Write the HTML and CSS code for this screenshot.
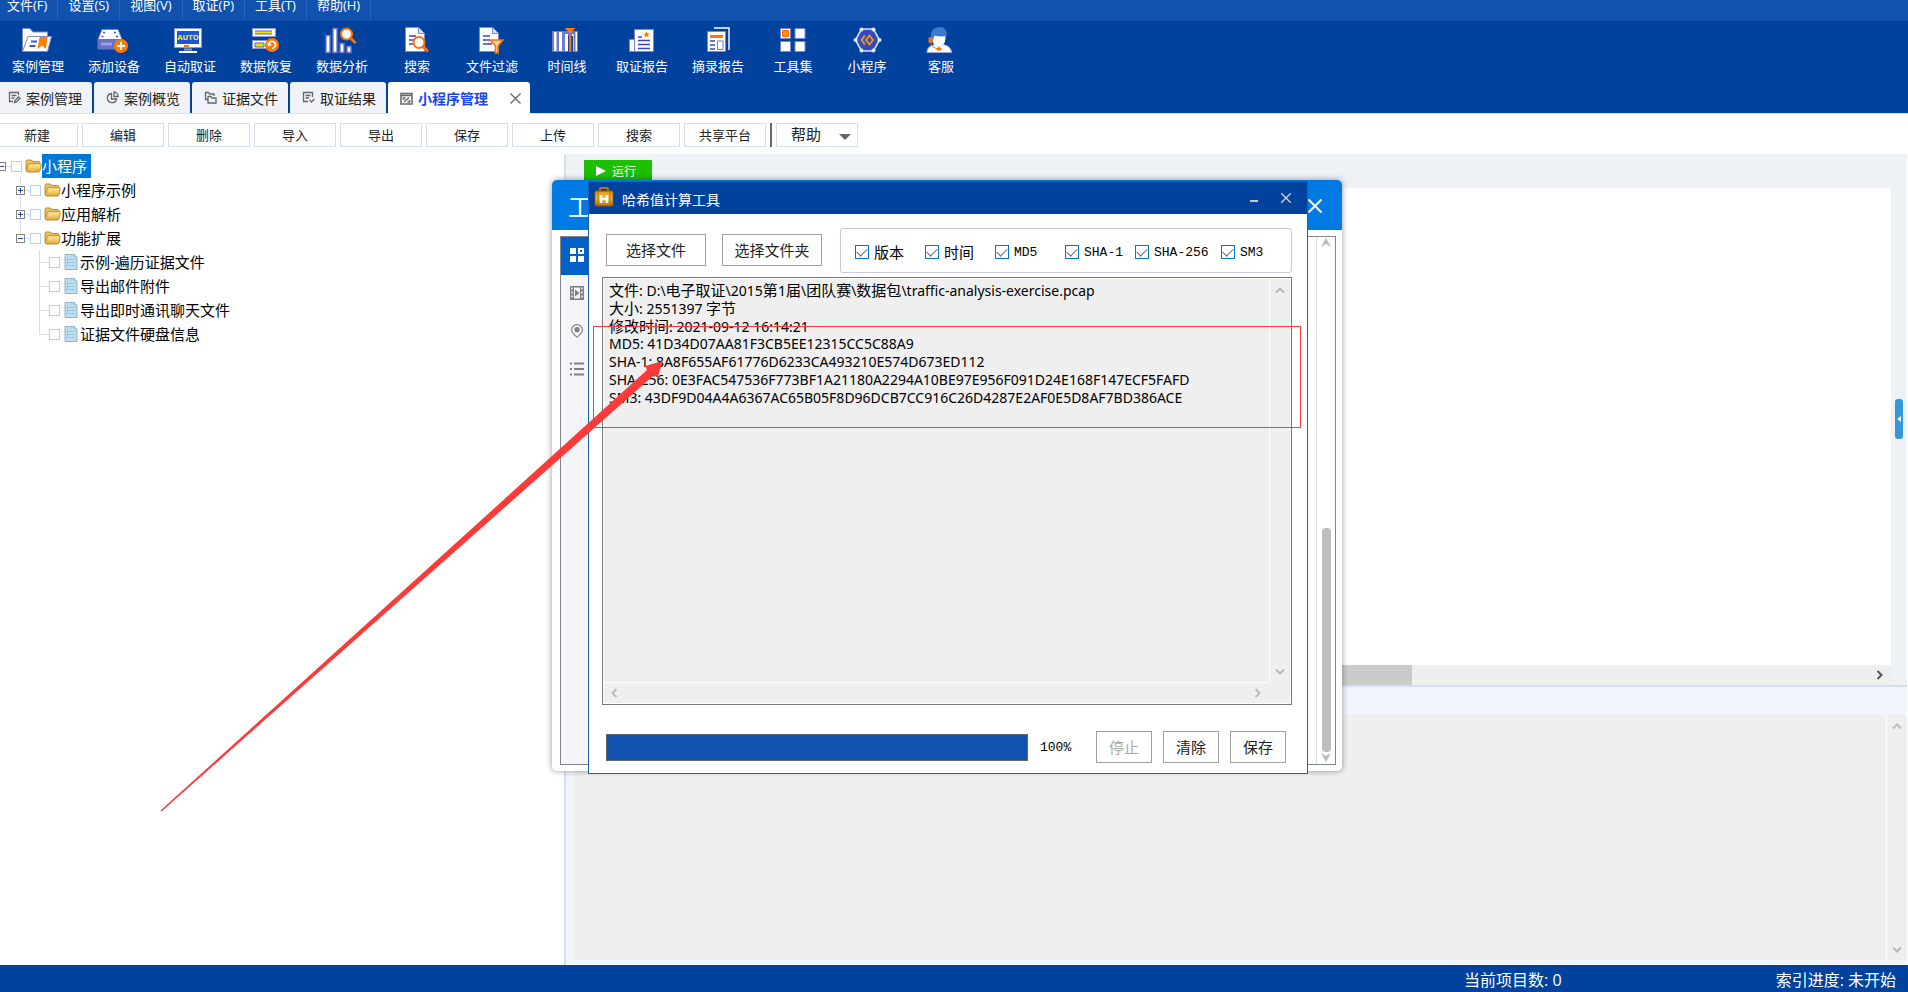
FILE: index.html
```html
<!DOCTYPE html>
<html lang="zh-CN">
<head>
<meta charset="utf-8">
<title>小程序管理</title>
<link rel="stylesheet" href="styles.css">
</head>
<body>
<svg class="defs" aria-hidden="true">
  <defs>
    <linearGradient id="gold" x1="0" y1="0" x2="0" y2="1"><stop offset="0" stop-color="#fff0a0"/><stop offset="1" stop-color="#e0a634"/></linearGradient>
    <linearGradient id="case" x1="0" y1="0" x2="0" y2="1"><stop offset="0" stop-color="#e89a1c"/><stop offset=".5" stop-color="#f2b640"/><stop offset="1" stop-color="#c06c08"/></linearGradient>
    <symbol id="folder" viewBox="0 0 17 16">
      <path d="M1 12.500V3.500q0-1.500 1.500-1.500H6l2 1.500h5.500q1.500 0 1.500 1.500v2" fill="#e9c25c" stroke="#b58e34"/>
      <path d="M1.500 12.500L3 7q.3-1.300 1.500-1.300H15q1.400 0 1.200 1.200l-1.200 5.600q-.3 1.500-1.600 1.500H2.600q-1.400 0-1.100-1.500z" fill="url(#gold)" stroke="#b58e34"/>
    </symbol>
    <symbol id="script" viewBox="0 0 14 16">
      <path d="M1 .5h9.500l2.500 2.500v12.500H1z" fill="#bcdcf0" stroke="#8fb4cc"/>
      <path d="M10.500.5v2.500H13" fill="#e8f6ff" stroke="#8fb4cc"/>
      <path d="M5 5.500h6M5 8.500h6M5 11.500h6" stroke="#9cc4de"/>
      <path d="M3 5.500h1M3 8.500h1" stroke="#3fae54"/><path d="M3 11.500h1" stroke="#d2695a"/>
    </symbol>
    <symbol id="up" viewBox="0 0 10 8"><path d="M1 6.500L5 2.500l4 4" fill="none" stroke="currentColor" stroke-width="2"/></symbol>
    <symbol id="down" viewBox="0 0 10 8"><path d="M1 1.500l4 4 4-4" fill="none" stroke="currentColor" stroke-width="2"/></symbol>
    <symbol id="left" viewBox="0 0 8 10"><path d="M6.500 1l-4 4 4 4" fill="none" stroke="currentColor" stroke-width="2"/></symbol>
    <symbol id="right" viewBox="0 0 8 10"><path d="M1.500 1l4 4-4 4" fill="none" stroke="currentColor" stroke-width="2"/></symbol>
    <symbol id="cross" viewBox="0 0 10 10"><path d="M0 0l10 10M10 0L0 10" fill="none" stroke="currentColor" stroke-width="1.300"/></symbol>
  </defs>
</svg>

<nav class="menubar">
  <button>文件(F)</button><button>设置(S)</button><button>视图(V)</button><button>取证(P)</button><button>工具(T)</button><button>帮助(H)</button>
</nav>

<div class="toolbar">
  <button class="tool"><svg viewBox="0 0 32 28"><path d="M.5 25.500V2.500H8l3 3.500h14.500v4" fill="#fff" stroke="#8087cc"/><path d="M.5 25.500L6 10.500h23.500l-4 15z" fill="#fff" stroke="#8087cc"/><path d="M9 15.500h6M7.500 20h6" stroke="#3f55cf" stroke-width="2"/><path d="M17.500 11h8l-1.500 12-4-3.500-4.500 3.500z" fill="#ff7d00"/></svg><span>案例管理</span></button>
  <button class="tool"><svg viewBox="0 0 32 28"><path d="M4 3.500h16l4 10H0z" fill="#fff" stroke="#8087cc"/><rect x="-.5" y="13" width="25" height="10.500" rx="1" fill="#676fc6"/><path d="M3 18h11" stroke="#9aa0dd" stroke-width="3"/><path d="M5 6.500h2M16 6.500h2M3.500 10.500h2M18 10.500h2" stroke="#4655bb" stroke-width="1.500"/><circle cx="23" cy="20" r="7" fill="#ff7a00"/><path d="M23 16v8M19 20h8" stroke="#fff" stroke-width="2"/></svg><span>添加设备</span></button>
  <button class="tool"><svg viewBox="0 0 32 28"><rect x=".5" y="2.500" width="27" height="19" fill="#fff" stroke="#8d96d8"/><rect x="3" y="5" width="22" height="13" fill="#1c56d4"/><text x="14" y="14" text-anchor="middle" class="auto">AUTO</text><path d="M10 20h5" stroke="#ff7400" stroke-width="2"/><path d="M10 23.500h8" stroke="#8d96d8" stroke-width="2"/><path d="M5 26h18" stroke="#fff" stroke-width="2"/></svg><span>自动取证</span></button>
  <button class="tool"><svg viewBox="0 0 32 28"><rect x="2.500" y="2.500" width="23" height="8" fill="#fff" stroke="#8d96d8"/><path d="M5 6.500h17" stroke="#5964bb" stroke-width="4"/><path d="M5 6.500h17" stroke="#ece200" stroke-width="2"/><rect x="2.500" y="14.500" width="20" height="8" fill="#fff" stroke="#8d96d8"/><path d="M5 17h9v4H5z" fill="#ece200" stroke="#5964bb"/><circle cx="22" cy="19" r="7" fill="#ff7a00"/><path d="M19 18q1-3 4-2.500 3 1 2.500 4-.8 2.500-3.500 3" fill="none" stroke="#fff" stroke-width="1.600"/><path d="M17 16l1 4.500 4-1.500z" fill="#fff"/></svg><span>数据恢复</span></button>
  <button class="tool"><svg viewBox="0 0 32 28"><g fill="#fff" stroke="#6f78cb" stroke-width="1.400"><path d="M0 9.500h4v17H0zM7 2.500h4v24H7zM14 17.500h4v9h-4zM21 20.500h4v6h-4z"/></g><circle cx="20.500" cy="8" r="5.500" fill="#fff" stroke="#ff7000" stroke-width="2"/><path d="M24.500 12l5 5" stroke="#ff7000" stroke-width="3"/></svg><span>数据分析</span></button>
  <button class="tool"><svg viewBox="0 0 32 28"><path d="M4.500 1.500h13l6 6v18h-19z" fill="#fff" stroke="#8087cc"/><path d="M17.500 1.500v6h6" fill="#dce0f6" stroke="#8087cc"/><path d="M8 10h7M8 14h5M8 18h6" stroke="#3846cc" stroke-width="1.600"/><circle cx="18" cy="16.500" r="5.500" fill="#fff" stroke="#ff7000" stroke-width="2"/><path d="M22 20.500l5 5" stroke="#ff7000" stroke-width="3"/></svg><span>搜索</span></button>
  <button class="tool"><svg viewBox="0 0 32 28"><path d="M3.500 1.500h13l6 6v18h-19z" fill="#fff" stroke="#8087cc"/><path d="M16.500 1.500v6h6" fill="#dce0f6" stroke="#8087cc"/><path d="M7 10h7M7 14h7M7 18h9" stroke="#3846cc" stroke-width="1.600"/><path d="M14.500 14h12.500l-5 6v7h-2.500v-7z" fill="#ffd8b0" stroke="#ff7000" stroke-width="1.600"/></svg><span>文件过滤</span></button>
  <button class="tool"><svg viewBox="0 0 32 28"><path d="M1 5h26v21H1z" fill="#7079cb"/><path d="M3 6h2.500v19H3zM8 6h3v19H8zM14 8h3v17h-3zM21 8h1.500v17H21zM24.500 6H26v19h-1.500z" fill="#fff"/><path d="M17 10h5v16h-5z" fill="#1c4aa0"/><path d="M19.200 10v16" stroke="#ff7600" stroke-width="2"/><path d="M13.500 2h11l-5.500 5.500z" fill="#ff7600"/></svg><span>时间线</span></button>
  <button class="tool"><svg viewBox="0 0 32 28"><path d="M3.500 25.500v-12h5v12z" fill="#fff" stroke="#8087cc"/><path d="M8.500 3.500h19v22h-19z" fill="#fff" stroke="#8087cc"/><path d="M12 11h4M12 14.500h12M12 18.500h12M12 22.500h12" stroke="#3846cc" stroke-width="1.600"/><path d="M20.500 5l.9 2.500H24l-2.100 1.600.8 2.600-2.200-1.600-2.200 1.600.8-2.600L17 7.500h2.600z" fill="#ff7600"/></svg><span>取证报告</span></button>
  <button class="tool"><svg viewBox="0 0 32 28"><path d="M12 2h15v22" fill="none" stroke="#fff" stroke-width="1.400"/><path d="M5.500 5.500h18v20h-18z" fill="#fff" stroke="#8087cc"/><path d="M8 10.500h13" stroke="#ff7600" stroke-width="3"/><path d="M8 15h5M8 19h5M8 23h5" stroke="#3846cc" stroke-width="1.600"/><path d="M15.500 15h5.500v8.500h-5.500z" fill="#fff" stroke="#6f78cb"/></svg><span>摘录报告</span></button>
  <button class="tool"><svg viewBox="0 0 32 28"><g fill="#fff" stroke="#7a85cf"><path d="M3.500 2.500h10v10h-10zM18 2.500h10v10H18zM3.500 15.500h10v10h-10zM18 15.500h10v10H18z"/></g><path d="M5.500 4.500h6v6h-6z" fill="#ff8a1a" stroke="#ff7000"/></svg><span>工具集</span></button>
  <button class="tool"><svg viewBox="0 0 32 28"><path d="M10.500 3h12l6 11-6 11h-12l-6-11z" fill="#3848c4" stroke="#c9e4fb" stroke-width="1.600"/><g fill="#e4f5ff"><circle cx="10.500" cy="3.500" r="2"/><circle cx="22.500" cy="3.500" r="2"/><circle cx="28.500" cy="14" r="2"/><circle cx="22.500" cy="24.500" r="2"/><circle cx="10.500" cy="24.500" r="2"/><circle cx="4.500" cy="14" r="2"/></g><path d="M14 9.500L10.500 14l3.500 4.500M18.500 9.500L15 14l3.500 4.500L22 14z" fill="none" stroke="#ffa000" stroke-width="1.600"/></svg><span>小程序</span></button>
  <button class="tool"><svg viewBox="0 0 32 28"><path d="M2 26.500q0-6.500 8-8l4 3 4-3q8 1.500 8.500 8z" fill="#fff" stroke="#9fb0e0"/><path d="M7 8q7 3 13.500 0v4q-.5 8-6.500 9-6.500-1-7-9z" fill="#fff"/><path d="M6 11Q5.500 1 14.500 1q8 0 7.500 9-7 1-12.500-.5L8 14H6z" fill="#3b79cf"/><rect x="3.500" y="11" width="4" height="6" rx="1.500" fill="#ff7000"/><path d="M5.500 16q1 6 8 7" fill="none" stroke="#ff7000"/><rect x="11.500" y="21.500" width="5" height="3" rx="1.500" fill="#ff7000"/></svg><span>客服</span></button>
</div>

<div class="tabs">
  <button class="tab"><svg viewBox="0 0 13 13"><path d="M10.500 4V1.500h-9v9H5M3.500 4.500h5M3.500 7h3M6.500 11.500l.5-2L10.500 6 12 7.500 8.500 11z"/></svg>案例管理</button>
  <button class="tab"><svg viewBox="0 0 13 13"><path d="M5.500 2.500A4.600 4.600 0 1 0 10.500 8H5.500zM8 1V5.500h4.200A4.500 4.500 0 0 0 8 1z"/></svg>案例概览</button>
  <button class="tab"><svg viewBox="0 0 13 13"><path d="M3.500 8.500h-2v-7h3L5.500 3H10v2M4 5.500h3L8 7h4v5H4z"/></svg>证据文件</button>
  <button class="tab"><svg viewBox="0 0 13 13"><path d="M10.500 6V1.500h-9v9H6M3.500 4.500h5M3.500 7h3.500M7.500 9l2 2 3-3"/></svg>取证结果</button>
  <button class="tab active"><svg viewBox="0 0 13 13"><path d="M1 1.500h11v10.500H1zM1 3.500h11M4 10l5-4.500M3.500 8V6h2M9.500 8v2h-2" stroke-width="1.500"/></svg>小程序管理<svg class="tab-x" viewBox="0 0 11 11"><path d="M.5.5l10 10M10.500.5l-10 10"/></svg></button>
</div>

<div class="actions">
  <button>新建</button><button>编辑</button><button>删除</button><button>导入</button><button>导出</button><button>保存</button><button>上传</button><button>搜索</button><button>共享平台</button>
  <i class="bar"></i>
  <label class="help"><select aria-label="帮助"><option>帮助</option></select><svg viewBox="0 0 12 6"><path d="M0 0h12L6 6z" fill="#666"/></svg></label>
</div>

<main class="work">
  <aside class="tree">
    <ul>
      <li><div class="row root"><button class="exp minus" aria-label="折叠"></button><i class="stub"></i><input type="checkbox" id="n0"><svg class="folder"><use href="#folder"/></svg><label class="picked" for="n0">小程序</label></div>
        <ul class="level1">
          <li><div class="row"><button class="exp plus" aria-label="展开"></button><i class="stub"></i><input type="checkbox" id="n1"><svg class="folder"><use href="#folder"/></svg><label for="n1">小程序示例</label></div></li>
          <li><div class="row"><button class="exp plus" aria-label="展开"></button><i class="stub"></i><input type="checkbox" id="n2"><svg class="folder"><use href="#folder"/></svg><label for="n2">应用解析</label></div></li>
          <li><div class="row"><button class="exp minus" aria-label="折叠"></button><i class="stub"></i><input type="checkbox" id="n3"><svg class="folder"><use href="#folder"/></svg><label for="n3">功能扩展</label></div>
            <ul class="level2">
              <li><div class="row"><i class="branch"></i><input type="checkbox" id="n4"><svg class="script"><use href="#script"/></svg><label for="n4">示例-遍历证据文件</label></div></li>
              <li><div class="row"><i class="branch"></i><input type="checkbox" id="n5"><svg class="script"><use href="#script"/></svg><label for="n5">导出邮件附件</label></div></li>
              <li><div class="row"><i class="branch"></i><input type="checkbox" id="n6"><svg class="script"><use href="#script"/></svg><label for="n6">导出即时通讯聊天文件</label></div></li>
              <li><div class="row"><i class="branch"></i><input type="checkbox" id="n7"><svg class="script"><use href="#script"/></svg><label for="n7">证据文件硬盘信息</label></div></li>
            </ul>
          </li>
        </ul>
      </li>
    </ul>
  </aside>

  <section class="editor">
    <div class="run-row"><button class="run"><svg viewBox="0 0 10 10"><path d="M0 0l10 5-10 5z" fill="#fff"/></svg>运行</button></div>
    <div class="code-row">
      <div class="code">
        <textarea class="code-text" aria-label="代码"></textarea>
        <div class="code-scroll"><i class="code-thumb"></i><svg class="arrow-h"><use href="#right"/></svg></div>
      </div>
      <button class="handle" aria-label="展开面板"><svg viewBox="0 0 4 6"><path d="M4 0v6L0 3z" fill="#fff"/></svg></button>
    </div>
    <div class="out-head"></div>
    <div class="out">
      <textarea class="out-text" aria-label="输出" readonly></textarea>
      <div class="out-scroll"><svg class="arrow-v"><use href="#up"/></svg><svg class="arrow-v"><use href="#down"/></svg></div>
    </div>
  </section>
</main>

<footer class="status"><span>当前项目数: 0</span><span>索引进度: 未开始</span></footer>

<section class="toolbox">
  <header><h2>工</h2><button aria-label="关闭"><svg viewBox="0 0 14 14"><path d="M.5.5l13 13M13.500.5l-13 13" stroke="#fff" stroke-width="2"/></svg></button></header>
  <div class="toolbox-body">
    <nav class="side">
      <button class="on" aria-label="全部"><svg viewBox="0 0 14 14"><path d="M0 0h6v6H0zM0 8h6v6H0zM8 8h6v6H8z" fill="#fff"/><path d="M9 1h4v4H9z" fill="none" stroke="#fff" stroke-width="2"/></svg></button>
      <button aria-label="媒体"><svg viewBox="0 0 14 14"><path d="M0 0h14v14H0z" fill="#808080"/><path d="M4 1.500h6v11H4z" fill="#f3f5f8"/><path d="M5 3.500v7L9.500 7z" fill="#808080"/><path d="M2 1.500v11M12 1.500v11" stroke="#f3f5f8" stroke-width="1.500" stroke-dasharray="2 2"/></svg></button>
      <button aria-label="位置"><svg viewBox="0 0 14 16"><path d="M7 15Q.8 10 .8 7a6.200 6.200 0 0 1 12.400 0Q13.200 10 7 15z" fill="none" stroke="#888" stroke-width="1.400"/><circle cx="7" cy="6.500" r="3" fill="#808080"/></svg></button>
      <button aria-label="列表"><svg viewBox="0 0 14 14"><path d="M0 1.500h2M4 1.500h10M0 7h2M4 7h10M0 12.500h2M4 12.500h10" stroke="#808080" stroke-width="2"/></svg></button>
    </nav>
    <div class="toolbox-scroll"><svg viewBox="0 0 10 9"><path d="M5 0l5 9-5-3-5 3z" fill="#bbb"/></svg><i></i><svg viewBox="0 0 10 9"><path d="M5 9l5-9-5 3-5-3z" fill="#bbb"/></svg></div>
  </div>
</section>

<section class="hash">
  <header>
    <svg class="case" viewBox="0 0 20 20"><path d="M6 4V2q0-1 1-1h6q1 0 1 1v2" fill="none" stroke="#b87414" stroke-width="2"/><rect x="1" y="4" width="18" height="15" rx="1" fill="url(#case)" stroke="#8a520a"/><path d="M4 4v15M16 4v15" stroke="#b06808"/><path d="M7 8v8M13 8v8M7 12h6" stroke="#fff" stroke-width="2.500"/></svg>
    <h1>哈希值计算工具</h1>
    <button class="min" aria-label="最小化"></button>
    <button class="close" aria-label="关闭"><svg><use href="#cross"/></svg></button>
  </header>
  <div class="pick">
    <button>选择文件</button><button>选择文件夹</button>
    <div class="algos">
      <label><input type="checkbox" checked>版本</label>
      <label><input type="checkbox" checked>时间</label>
      <label><input type="checkbox" checked>MD5</label>
      <label><input type="checkbox" checked>SHA-1</label>
      <label><input type="checkbox" checked>SHA-256</label>
      <label><input type="checkbox" checked>SM3</label>
    </div>
  </div>
  <div class="result">
    <div class="report" tabindex="0">
      <p><b>文件</b>: D:\<b>电子取证</b>\2015<b>第</b>1<b>届</b>\<b>团队赛</b>\<b>数据包</b>\traffic-analysis-exercise.pcap</p>
      <p><b>大小</b>: 2551397 <b>字节</b></p>
      <p><b>修改时间</b>: 2021-09-12 16:14:21</p>
      <p>MD5: 41D34D07AA81F3CB5EE12315CC5C88A9</p>
      <p>SHA-1: 8A8F655AF61776D6233CA493210E574D673ED112</p>
      <p>SHA-256: 0E3FAC547536F773BF1A21180A2294A10BE97E956F091D24E168F147ECF5FAFD</p>
      <p>SM3: 43DF9D04A4A6367AC65B05F8D96DCB7CC916C26D4287E2AF0E5D8AF7BD386ACE</p>
    </div>
    <div class="v"><svg class="arrow-v"><use href="#up"/></svg><svg class="arrow-v"><use href="#down"/></svg></div>
    <div class="h"><svg class="arrow-h"><use href="#left"/></svg><svg class="arrow-h"><use href="#right"/></svg></div>
  </div>
  <div class="foot">
    <progress value="100" max="100" aria-label="进度"></progress><span>100%</span>
    <button disabled>停止</button><button>清除</button><button>保存</button>
  </div>
</section>

<svg class="marks" viewBox="0 0 1908 992" aria-hidden="true">
  <rect x="593.500" y="326.500" width="707" height="101" fill="none" stroke="#ff3b3b"/>
  <path d="M160.500 810.500L647 370l-2-4 18-5-5.500 16.500-4-2L161.500 811.500z" fill="#fb3a3a"/>
</svg>
</body>
</html>
```

FILE: styles.css
```css
* { box-sizing: border-box; }
body {
  margin: 0;
  height: 100vh;
  display: flex;
  flex-direction: column;
  position: relative;
  overflow: hidden;
  background: #fff;
  color: #222;
  font-family: "Open Sans", "Noto Sans CJK SC", sans-serif;
  font-size: 13px;
}
button, select, textarea, input { font: inherit; color: inherit; margin: 0; padding: 0; border: 0; border-radius: 0; background: none; }
svg { display: block; flex: none; }
textarea { resize: none; outline: 0; overflow: hidden; }
ul { list-style: none; margin: 0; padding: 0; }
h1, h2, p { margin: 0; font-weight: 400; }
.defs { position: absolute; width: 0; height: 0; }

.menubar { display: flex; height: 21px; flex: none; background: #1152ae; color: #fff; }
.menubar button { height: 19px; padding: 0 10px 8px; line-height: 11px; border-right: 1px solid #2c66bb; }
.menubar button:first-child { padding-left: 7px; }

.toolbar { display: flex; height: 61px; flex: none; background: #00429e; color: #fff; }
.tool { padding: 5px 12px 0; display: flex; flex-direction: column; align-items: center; min-width: 74px; }
.tool svg { width: 32px; height: 28px; overflow: visible; }
.tool span { line-height: 18px; margin-top: 3px; }
.auto { font: bold 7px "DejaVu Sans", sans-serif; fill: #e8e430; }

.tabs { display: flex; gap: 2px; height: 32px; flex: none; background: #00429e; border-bottom: 1px solid #d5dff0; }
.tab { display: flex; align-items: center; gap: 5px; width: 96px; padding: 0 0 0 12px; font-size: 14px; background: #eff2f7; border-radius: 3px 3px 0 0; white-space: nowrap; }
.tab:first-child { margin-left: -4px; }
.tab svg { width: 13px; height: 13px; fill: none; stroke: #666; stroke-width: 1.300; }
.tab.active { width: 142px; height: 32px; background: #fff; color: #1848e8; font-weight: 700; }
.tab .tab-x { width: 11px; height: 11px; margin-left: 17px; stroke-width: 1.300; }

.actions { display: flex; gap: 4px; height: 40px; flex: none; padding: 9px 0 7px; }
.actions button, .help { width: 82px; border: 1px solid #d6dff0; background: #fff; }
.actions button { padding-bottom: 2px; }
.actions button:first-child { margin-left: -4px; }
.bar { width: 2px; background: #666; }
.help { position: relative; }
.help select { appearance: none; width: 100%; height: 100%; padding: 0 0 2px 14px; font-size: 15px; line-height: 20px; }
.help svg { position: absolute; right: 6px; top: 10px; width: 12px; height: 6px; pointer-events: none; }

.work { flex: 1; min-height: 0; display: flex; padding-right: 1px; }
.tree { width: 564px; flex: none; font-size: 15px; color: #000; }
.row { display: flex; align-items: center; height: 24px; }
.row.root { margin-left: -3px; }
.level1 { margin-left: 16px; background: linear-gradient(#ddd, #ddd) 4px 0 / 1px 60px no-repeat; }
.level2 { margin-left: 23px; background: linear-gradient(#ddd, #ddd) 0 0 / 1px 85px no-repeat; }
.exp { width: 9px; height: 9px; border: 1px solid #848484; background: #fff linear-gradient(#2c4c9c, #2c4c9c) center / 5px 1px no-repeat; }
.exp.plus { background: linear-gradient(#2c4c9c, #2c4c9c) center / 5px 1px no-repeat, linear-gradient(#2c4c9c, #2c4c9c) center / 1px 5px no-repeat, #fff; }
.stub { width: 5px; height: 1px; background: #ddd; }
.branch { width: 10px; height: 1px; background: #ddd; }
.tree input { appearance: none; width: 11px; height: 11px; border: 1px solid #b9cdf8; background: #fff; }
.folder { width: 17px; height: 16px; margin-left: 3px; }
.script { width: 14px; height: 16px; margin: 0 2px 0 4px; }
.row label { line-height: 24px; }
.picked { background: #0078d7; color: #fff; padding-right: 4px; }

.editor { flex: 1; min-width: 0; display: flex; flex-direction: column; border-left: 2px solid #d6dff0; background: #eef2f7; }
.run-row { height: 34px; flex: none; padding: 6px 0 0 18px; }
.run { display: flex; align-items: center; gap: 6px; width: 68px; height: 22px; padding-left: 12px; background: #1dbf00; color: #fff; font-size: 12px; }
.run svg { width: 10px; height: 10px; }
.code-row { flex: 497; min-height: 0; display: flex; padding-left: 8px; }
.code { flex: 1; display: flex; flex-direction: column; background: #fff; }
.code-text { flex: 1; }
.code-scroll { height: 20px; display: flex; align-items: center; justify-content: space-between; padding-right: 7px; background: #efefef; color: #555; }
.code-thumb { width: 64%; height: 100%; background: #cbcbcb; }
.handle { width: 8px; height: 40px; margin: 211px 4px 0; padding-left: 2px; border-radius: 3px; background: #3498db; }
.handle svg { width: 4px; height: 6px; }
.out-head { height: 30px; flex: none; border-top: 2px solid #d5def0; background: #f2f6fc; }
.out { flex: 245; min-height: 0; display: flex; padding: 0 0 4px 8px; background: #f2f6fc; border-bottom: 1px solid #fff; }
.out-text { flex: 1; background: #efefef; }
.out-scroll { width: 21px; border-left: 1px solid #fff; padding: 7px 0 6px 5px; display: flex; flex-direction: column; justify-content: space-between; background: #efefef; color: #bbb; }
.arrow-v { width: 10px; height: 8px; }
.arrow-h { width: 8px; height: 10px; }

.status { display: flex; justify-content: flex-end; gap: 214px; height: 27px; flex: none; padding: 2px 12px 0 0; background: #00429e; color: #fff; font-size: 16px; line-height: 26px; }

.toolbox { position: absolute; left: 552px; top: 180px; width: 790px; height: 591px; display: flex; flex-direction: column; border-radius: 5px; overflow: hidden; background: #fff; box-shadow: 0 0 6px rgba(0, 0, 0, .4); }
.toolbox header { display: flex; justify-content: space-between; align-items: flex-start; height: 50px; padding: 19px 20px 0 16px; background: #007ae3; color: #fff; }
.toolbox h2 { font-size: 24px; line-height: 16px; }
.toolbox header svg { width: 14px; height: 14px; }
.toolbox-body { flex: 1; display: flex; justify-content: space-between; margin: 6px 6px 6px 8px; border: 1px solid #808590; }
.side { width: 28px; display: flex; flex-direction: column; background: #f3f5f8; }
.side button { height: 38px; padding: 0 0 2px 9px; }
.side .on { background: #0062c8; }
.side svg { width: 14px; height: 14px; }
.toolbox-scroll { width: 19px; padding: 1px 0 2px; display: flex; flex-direction: column; align-items: center; border-left: 1px solid #ddd; }
.toolbox-scroll svg { width: 10px; height: 9px; }
.toolbox-scroll i { width: 9px; height: 224px; margin: auto 0 1px; border-radius: 4px; background: #bebebe; }

.hash { position: absolute; left: 588px; top: 181px; width: 720px; height: 593px; display: flex; flex-direction: column; border: 1px solid #1a5fb8; background: #fff; font-size: 15px; }
.hash header { display: flex; height: 32px; padding: 5px 16px 0 5px; background: #00429e; color: #fff; }
.case { width: 20px; height: 20px; }
.hash h1 { margin: 0 auto 0 8px; font-size: 14px; line-height: 26px; }
.hash header button { color: #d0d4dc; align-self: flex-start; }
.hash .min { width: 8px; height: 2px; margin: 13px 23px 0 0; background: #d0c8c0; }
.close svg { width: 10px; height: 10px; margin-top: 6px; }
.pick { display: flex; gap: 16px; padding: 14px 15px 4px 17px; align-items: flex-start; }
.pick button { width: 100px; height: 32px; margin-top: 6px; padding-bottom: 2px; border: 1px solid #a0a0a0; }
.algos { flex: 1; margin-left: 2px; height: 45px; padding: 0 14px; display: grid; grid-template-columns: repeat(4, 70px) 86px auto; align-items: center; border: 1px solid #c8c8da; border-radius: 3px; font-family: "Liberation Mono", "Noto Sans CJK SC", monospace; font-size: 13px; color: #000; }
.algos label { display: flex; align-items: center; gap: 5px; padding-top: 3px; }
.algos label:nth-child(-n+2) { font-size: 15px; }
.algos input { appearance: none; width: 14px; height: 14px; border: 1px solid #0078c8; }
.algos input:checked::before { content: ""; display: block; width: 9px; height: 5px; margin: 2px 0 0 1px; border: solid #666; border-width: 0 0 1px 1px; transform: rotate(-45deg); }
.result { flex: 1; margin: 0 15px 0 13px; display: grid; grid-template: 1fr 21px / 1fr 21px; padding: 1px; border: 1px solid #777; background: #efefef; box-shadow: inset 0 0 0 1px #fff; }
.report { padding: 2px 5px; font-family: "Noto Sans", "Noto Sans CJK SC", sans-serif; font-size: 14px; line-height: 18px; color: #000; white-space: pre; overflow: hidden; }
.report p { height: 18px; }
.report p + p { margin-top: 0; }
.report { white-space: nowrap; }
.report b { font-weight: 400; font-size: 15px; }
.result svg { color: #bbb; }
.result .v { border-left: 1px solid #fff; padding: 7px 0 6px 5px; display: flex; flex-direction: column; justify-content: space-between; }
.result .h { border-top: 1px solid #fff; display: flex; justify-content: space-between; padding: 5px 7px 0 6px; }
.foot { display: flex; align-items: center; height: 68px; padding: 16px 21px 0 17px; }
.foot progress { appearance: none; flex: 1; height: 27px; border: 1px solid #666; background: #fff; }
.foot progress::-webkit-progress-bar { background: #fff; }
.foot progress::-webkit-progress-value { background: #1152ae; }
.foot span { width: 68px; padding-left: 12px; font-family: "Liberation Mono", monospace; font-size: 13px; color: #000; }
.foot button { width: 56px; height: 32px; padding-bottom: 2px; border: 1px solid #a0a0a0; }
.foot button + button { margin-left: 11px; }
.foot button:disabled { color: #a8a8a8; }

.marks { position: absolute; left: 0; top: 0; width: 1908px; height: 992px; pointer-events: none; }
```
